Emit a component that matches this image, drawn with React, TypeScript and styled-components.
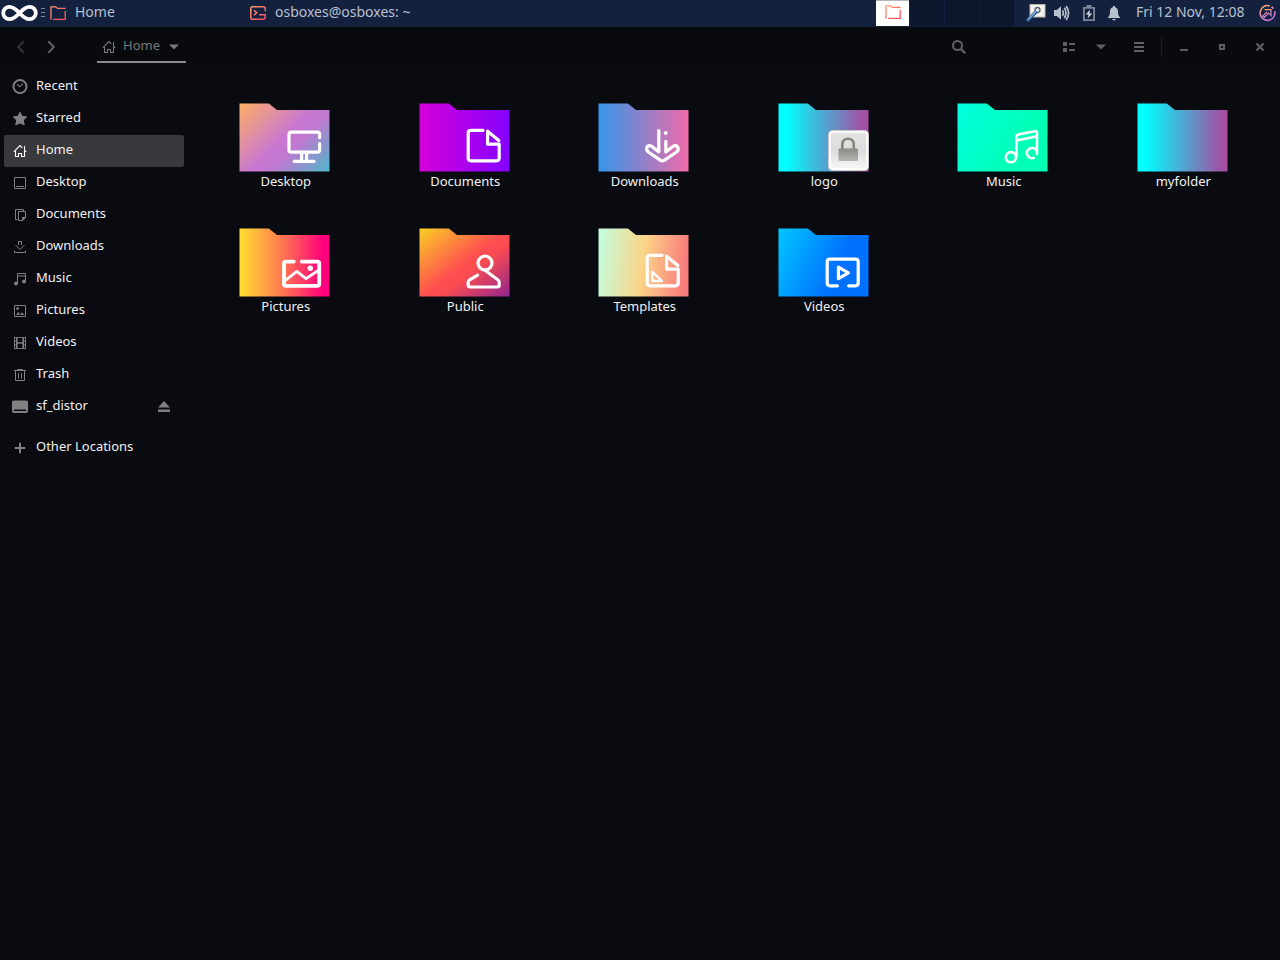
import React from "react";
import styled, { createGlobalStyle } from "styled-components";

const GlobalStyle = createGlobalStyle`
  * { box-sizing: border-box; }
  html, body, #root { height: 100%; }
  body {
    margin: 0;
    background: #0a0b10;
    color: #f0f0f1;
    font: 13px/20px "Noto Sans", "Open Sans", sans-serif;
  }
  button { font: inherit; color: inherit; background: none; border: 0; padding: 0; margin: 0; }
  a { color: inherit; text-decoration: none; }
  ul { list-style: none; margin: 0; padding: 0; }
  svg { display: block; flex: none; }
`;

const Screen = styled.div`
  min-height: 100%;
  display: flex;
  flex-direction: column;
`;

/* ---------- top panel ---------- */

const Panel = styled.header`
  display: flex;
  height: 27px;
  background: #13213f;
  color: #b9c0ce;
  font-size: 14px;
`;

const MenuButton = styled.button`
  width: 50px;
  height: 27px;
`;

const Tasks = styled.div`
  flex: 1;
  display: flex;
  min-width: 0;
`;

const Task = styled.button`
  display: flex;
  align-items: center;
  gap: 9px;
  width: 200px;
  text-align: left;
  white-space: nowrap;
`;

const Caption = styled.span`
  padding-bottom: 4px;
`;

const Workspaces = styled.div`
  display: flex;
  gap: 1px;
  padding-bottom: 1px;
`;

const Workspace = styled.button<{ $active?: boolean }>`
  display: flex;
  justify-content: center;
  width: ${(p) => (p.$active ? 33 : 34)}px;
  background: ${(p) => (p.$active ? "#ffffff" : "#0c172d")};
  border-top: 1px solid ${(p) => (p.$active ? "#b4b4b4" : "#0c172d")};
`;

const WorkspaceDrawing = styled.span`
  height: 25px;
  overflow: hidden;
  display: flex;
  align-items: flex-end;
`;

const Tray = styled.div`
  display: flex;
  align-items: center;
  gap: 13px;
  padding: 0 4px 0 12px;
`;

const TrayPair = styled.div`
  display: flex;
  gap: 8px;
`;

const TrayButton = styled.button`
  display: flex;
`;

const Clock = styled.button`
  min-width: 113px;
  padding: 0 0 4px 3px;
  text-align: left;
  white-space: nowrap;
`;

/* ---------- file manager ---------- */

const Toolbar = styled.div`
  display: flex;
  align-items: center;
  height: 40px;
  padding: 0 1px 0 6px;
  background: #090a0e;
  border-bottom: 1px solid #06070a;
  color: #5f6063;
`;

const ToolButton = styled.button<{ $width?: number; $dim?: boolean }>`
  display: flex;
  align-items: center;
  justify-content: center;
  width: ${(p) => p.$width ?? 38}px;
  height: 40px;
  color: ${(p) => (p.$dim ? "#343539" : "inherit")};
`;

const PathButton = styled.button`
  display: flex;
  align-items: center;
  gap: 6px;
  height: 33px;
  margin-left: 31px;
  padding: 3px 7px 0 4px;
  border-bottom: 2px solid #8b8c8e;
  color: #77787a;
`;

const PathName = styled.span`
  padding-bottom: 4px;
  padding-right: 3px;
`;

const Spacer = styled.div`
  flex: 1;
`;

const ToolGroup = styled.div`
  display: flex;
  margin-left: 75px;
  gap: 3px;
`;

const Pair = styled.div`
  display: flex;
`;

const Divider = styled.div`
  width: 1px;
  height: 20px;
  margin: 0 3px;
  background: #1c1d21;
`;

const Body = styled.div`
  flex: 1;
  display: flex;
`;

const Sidebar = styled.nav`
  width: 189px;
  flex: none;
  padding-top: 4px;
  border-right: 1px solid #06070a;
`;

const Place = styled.a<{ $current?: boolean }>`
  display: flex;
  align-items: center;
  gap: 8px;
  height: 32px;
  margin: 0 4px;
  padding: 0 8px;
  border-radius: 2px;
  background: ${(p) => (p.$current ? "#38393c" : "transparent")};
  svg { color: ${(p) => (p.$current ? "#ffffff" : "#7f8082")}; }
`;

const PlaceRow = styled.div`
  display: flex;
  align-items: center;
  justify-content: space-between;
  padding-right: 16px;
`;

const EjectButton = styled.button`
  color: #7f8082;
`;

const Rule = styled.hr`
  height: 1px;
  margin: 4px 0;
  border: 0;
  background: #050609;
`;

const Files = styled.main`
  flex: 1;
  padding: 36px 8px 0 6px;
`;

const Grid = styled.ul`
  display: grid;
  grid-template-columns: repeat(auto-fill, minmax(170px, 1fr));
  row-gap: 37px;
`;

const Item = styled.li`
  display: flex;
  justify-content: center;
`;

const FolderButton = styled.button`
  display: flex;
  flex-direction: column;
  align-items: center;
  height: 88px;
`;

const FolderName = styled.span`
  padding-left: 2px;
  line-height: 18px;
`;

/* ---------- drawings ---------- */

const Warm = ({ id }: { id: string }) => (
  <defs>
    <linearGradient id={id} x1="0" y1="0" x2="1" y2="1" gradientUnits="objectBoundingBox">
      <stop offset="0" stopColor="#ff9a6c" />
      <stop offset="1" stopColor="#ff4560" />
    </linearGradient>
  </defs>
);

const OutlineFolder = ({ id }: { id: string }) => (
  <svg width="16" height="27" viewBox="0 0 16 27" fill="none" stroke={`url(#${id})`} strokeWidth="1.3">
    <Warm id={id} />
    <path d="M3.2 19.3H15.2V11M1 19.8V6.8H5.6L7.6 8.4H15.6" />
  </svg>
);

const TerminalIcon = () => (
  <svg width="16" height="27" viewBox="0 0 16 27" fill="none" stroke="url(#term)" strokeWidth="1.5">
    <Warm id="term" />
    <path d="M15.2 11.2V8.7Q15.2 6.8 13.2 6.8H2.8Q.8 6.8 .8 8.7V17.3Q.8 19.2 2.8 19.2H13.2Q15.2 19.2 15.2 17.3V14.7H9.2M3.9 10.2L6.8 12.7L3.9 15.2" />
  </svg>
);

const LogoIcon = () => (
  <svg width="50" height="27" viewBox="0 0 50 27" fill="none">
    <path
      d="M19.5 13C15.5 8.5 13 6.8 9.4 6.8A6.2 6.2 0 0 0 9.4 19.2C13 19.2 15.5 17.5 19.5 13C23.5 8.5 26 6.8 29.6 6.8A6.2 6.2 0 0 1 29.6 19.2C26 19.2 23.5 17.5 19.5 13Z"
      stroke="#fff"
      strokeWidth="3.8"
    />
    <path d="M41 8.5H45M41 12.5H45M41 16.5H45" stroke="#7f8797" />
  </svg>
);

const ViewerIcon = () => (
  <svg width="20" height="27" viewBox="0 0 20 27">
    <rect x="4" y="4.5" width="15" height="12.5" fill="#f2f2ef" stroke="#b9b7ad" />
    <circle cx="11.5" cy="10" r="2.5" fill="#dfe6ee" stroke="#59616b" strokeWidth="1.3" />
    <path d="M1 21L10.5 11.5" stroke="#2f5c98" strokeWidth="3.4" />
    <path d="M2 19.5L10 11.5" stroke="#8fb6e2" strokeWidth="1.2" />
  </svg>
);

const SpeakerIcon = () => (
  <svg width="16" height="27" viewBox="0 0 16 27" fill="none" stroke="#b9c0ce" strokeWidth="1.7">
    <path d="M0 10H2.8L7 6.2V19.8L2.8 16H0Z" fill="#b9c0ce" stroke="none" />
    <path d="M8.4 10.2Q10.4 13 8.4 15.8M10.3 7.8Q13.6 13 10.3 18.2M12.2 6Q17 13 12.2 20" />
  </svg>
);

const BatteryIcon = () => (
  <svg width="12" height="27" viewBox="0 0 12 27">
    <path d="M3.5 5H8.5V7H12V21H0V7H3.5ZM1.8 8.8V19.2H10.2V8.8Z" fill="#7e8798" fillRule="evenodd" />
    <path d="M7.2 9.5L2.8 14.4H5.6L4.6 18.6L9.2 13.4H6.4Z" fill="#d5d9e0" />
  </svg>
);

const BellIcon = () => (
  <svg width="12" height="27" viewBox="0 0 12 27" fill="#b9c0ce">
    <path d="M5 6H7V7.2C9.2 7.7 10 9.5 10 11.5C10 14.8 10.6 16 12 17.2V18H0V17.2C1.4 16 2 14.8 2 11.5C2 9.5 2.8 7.7 5 7.2ZM4 19H8Q7.6 20.4 6 20.4Q4.4 20.4 4 19Z" />
  </svg>
);

const SessionIcon = () => (
  <svg width="17" height="27" viewBox="0 0 17 27" fill="none" stroke="url(#ring)" strokeWidth="1.6">
    <defs>
      <linearGradient id="ring" x1="0" y1="0" x2="0.6" y2="1">
        <stop offset="0" stopColor="#ffb169" />
        <stop offset="0.55" stopColor="#e48cae" />
        <stop offset="1" stopColor="#c473e0" />
      </linearGradient>
    </defs>
    <path d="M10.8 5.9A7.4 7.4 0 1 0 15.7 11.2M12.6 6.8L14.4 8.6" />
    <path d="M5.5 9.6H12V15.6L9.6 13.2L5.4 17.4L4 15.9L8.2 11.8" strokeWidth="1.2" />
  </svg>
);

const HouseIcon = () => (
  <svg width="16" height="16" viewBox="0 0 16 16" fill="none" stroke="currentColor" strokeWidth="1.1">
    <path d="M3.5 8V13.5H6.5V10.5H9.5V13.5H12.5V8M1.8 8.8L8 2.6L10.2 4.8M14.2 8.8L12.5 7V3" />
  </svg>
);

const Caret = () => (
  <svg width="10" height="6" viewBox="0 0 10 6">
    <path d="M0 0.5H10L5 5.5Z" fill="currentColor" />
  </svg>
);

const Chevron = ({ back }: { back?: boolean }) => (
  <svg width="14" height="14" viewBox="0 0 14 14" fill="none" stroke="currentColor" strokeWidth="2">
    <path d={back ? "M9.7 1.3L4.2 7L9.7 12.7" : "M4.3 1.3L9.8 7L4.3 12.7"} />
  </svg>
);

const placeIcons: Record<string, React.ReactNode> = {
  Recent: (
    <>
      <circle cx="8" cy="7.5" r="6.5" strokeWidth="2" />
      <path d="M5 5.2L7.6 7.8L11 4.6" strokeWidth="1.1" />
    </>
  ),
  Starred: (
    <path
      d="M8 1.2L10 5.3L14.6 5.9L11.3 9.1L12.2 13.9L8 11.9L3.8 13.9L4.7 9.1L1.4 5.9L6 5.3Z"
      fill="currentColor"
      strokeLinejoin="round"
    />
  ),
  Desktop: <path d="M2.5 2.5H13.5V13.5H2.5ZM4 11.5H12" />,
  Documents: (
    <>
      <path d="M5.5 12.5H3.5V2.5H11.5V4M6 4.5H13.5V11L10.5 13.5H6.5V4.5" />
      <path d="M10 10H14L10 14Z" fill="currentColor" stroke="none" />
    </>
  ),
  Downloads: <path d="M6.5 6V2.5H9.5V6M3.5 6L8 10.5L12.5 6M2.5 11.5V13.5H13.5V11.5" />,
  Music: (
    <>
      <path d="M5.5 12V2.5H13.5V10.5M5.5 5H13.5" />
      <circle cx="4" cy="12.4" r="2" fill="currentColor" stroke="none" />
      <circle cx="12" cy="10.6" r="2" fill="currentColor" stroke="none" />
    </>
  ),
  Pictures: (
    <>
      <path d="M2.5 2.5H13.5V13.5H2.5Z" />
      <path d="M4 12L6.5 9L7.5 10V12ZM8 12L10 9.3L12.4 12Z" fill="currentColor" stroke="none" />
      <circle cx="5.6" cy="5.6" r="1.4" fill="currentColor" stroke="none" />
    </>
  ),
  Videos: (
    <>
      <path d="M4.8 2V14M11.2 2V14M5 8H11" strokeWidth="1.6" />
      <path d="M2.5 2V14M13.5 2V14M2 2.5H14M2 13.5H14M2 6H5M2 10H5M11 6H14M11 10H14" strokeWidth="0.9" />
    </>
  ),
  Trash: <path d="M2 3.5H14M5.5 3.5V2.5H10.5V3.5M3.5 4V13.5H12.5V4M6.5 6V11.5M9.5 6V11.5" />,
  sf_distor: (
    <path
      d="M2 1.5H14Q16 1.5 16 3.5V12Q16 14 14 14H2Q0 14 0 12V3.5Q0 1.5 2 1.5ZM2 10.5V12H14V10.5Z"
      fill="currentColor"
      fillRule="evenodd"
      stroke="none"
    />
  ),
  "Other Locations": <path d="M8 2.8V13.2M2.8 8H13.2" strokeWidth="2" />,
};

const PlaceIcon = ({ name }: { name: string }) =>
  name === "Home" ? (
    <HouseIcon />
  ) : (
    <svg width="16" height="16" viewBox="0 0 16 16" fill="none" stroke="currentColor">
      {placeIcons[name]}
    </svg>
  );

type Folder = {
  name: string;
  stops: [number, string][];
  to: [number, number];
  glyph?: React.ReactNode;
};

const page = "M64 27.3H52Q49.2 27.3 49.2 30V55Q49.2 57.8 52 57.8H77.3Q80.2 57.8 80.2 55V41.2H68.6V28.2L79.8 37.6";
const aqua: [number, string][] = [[0, "#00ffff"], [0.08, "#00ffff"], [0.5, "#4fa8d3"], [0.92, "#a052a4"], [1, "#a84ca3"]];

const folders: Folder[] = [
  {
    name: "Desktop",
    stops: [[0, "#ffaf62"], [0.5, "#c877d3"], [0.62, "#c078d0"], [1, "#4cb8c9"]],
    to: [80, 80],
    glyph: <path d="M80.6 34.6V31.4Q80.6 29.2 78.4 29.2H52.2Q50 29.2 50 31.4V47Q50 49.2 52.2 49.2H78.4Q80.6 49.2 80.6 47V40.6M62.6 49.5V58M67.6 49.5V58M55.2 58.4H75" />,
  },
  {
    name: "Documents",
    stops: [[0, "#d400d8"], [1, "#8400ff"]],
    to: [91, 0],
    glyph: <path d={page} />,
  },
  {
    name: "Downloads",
    stops: [[0, "#3396ea"], [1, "#f06ba8"]],
    to: [91, 0],
    glyph: (
      <>
        <path d="M60.8 27.6V49L54 43.6Q50.5 41.3 49 44.2Q47.7 47 50.6 49.2L62.6 57.4Q64.4 58.5 66.2 57.4L78.2 49.2Q81.2 47 79.8 44.2Q78.3 41.3 74.8 43.6L67.8 49V38.4" />
        <circle cx="67.7" cy="30.1" r="2" fill="#fff" stroke="none" />
      </>
    ),
  },
  {
    name: "logo",
    stops: aqua,
    to: [91, 0],
    glyph: (
      <>
        <rect x="50.5" y="27.5" width="40" height="40" rx="4" fill="url(#emblem)" stroke="#c9c9cb" strokeWidth="1" />
        <rect x="52" y="29" width="37" height="37" rx="3" stroke="#fff" strokeWidth="1.5" />
        <path d="M64.3 47V42Q64.3 35.8 70 35.8Q75.8 35.8 75.8 42V47" stroke="#85867f" strokeWidth="2.6" />
        <rect x="60.5" y="45.5" width="19.5" height="12.5" rx="1" fill="url(#lockbody)" stroke="none" />
      </>
    ),
  },
  {
    name: "Music",
    stops: [[0, "#00ffe0"], [0.7, "#00ffb8"], [1, "#00ffb4"]],
    to: [91, 50],
    glyph: (
      <g strokeWidth="2.6">
        <circle cx="53.9" cy="54.2" r="5.1" />
        <path d="M59.4 54V34Q59.4 31.9 61.4 31.4L77.6 28.2Q80 27.9 80 30.2V51M59.4 37.6L80 33.2M76.6 54.9A5.1 5.1 0 1 1 79.8 48.4" />
      </g>
    ),
  },
  { name: "myfolder", stops: aqua, to: [91, 0] },
  {
    name: "Pictures",
    stops: [[0, "#ffe12f"], [0.5, "#ff7252"], [0.92, "#ff007c"], [1, "#ff007c"]],
    to: [91, 0],
    glyph: (
      <>
        <path d="M54.8 33.6H46.8Q45 33.6 45 35.4V56Q45 57.8 46.8 57.8H78.4Q80.2 57.8 80.2 56V35.4Q80.2 33.6 78.4 33.6H62.8" strokeWidth="3.8" />
        <path d="M46 52.6L57.8 43.4L67 50.6L80 42" strokeWidth="2.8" />
        <circle cx="71.2" cy="40.2" r="2.7" fill="#fff" stroke="none" />
      </>
    ),
  },
  {
    name: "Public",
    stops: [[0, "#fad026"], [0.5, "#ff4f4f"], [0.6, "#f94b52"], [1, "#8a2391"]],
    to: [70, 88],
    glyph: (
      <>
        <circle cx="66" cy="35" r="7" />
        <path d="M58.6 47.2L50.6 51.8Q49.2 52.8 49.2 54.2V57Q49.2 59 51.2 59H78.2Q80.2 59 80.2 57V54.2Q80.2 52.8 78.8 51.8L65.6 42" />
      </>
    ),
  },
  {
    name: "Templates",
    stops: [[0, "#c0ffe2"], [0.53, "#fcd487"], [1, "#f97c7d"]],
    to: [91, 10],
    glyph: (
      <>
        <path d={page} />
        <path d="M54.4 43.8V53H64Z" strokeWidth="2.4" />
      </>
    ),
  },
  {
    name: "Videos",
    stops: [[0, "#00c8ff"], [0.72, "#0070ff"], [1, "#0070ff"]],
    to: [91, 40],
    glyph: (
      <>
        <path d="M59.4 57.8H52Q49.2 57.8 49.2 55V34Q49.2 31.2 52 31.2H77.4Q80.2 31.2 80.2 34V55Q80.2 57.8 77.4 57.8H70.6" />
        <path d="M60.4 39.2V50.6L70.4 44.9Z" />
      </>
    ),
  },
];

const FolderIcon = ({ name, stops, to, glyph }: Folder) => (
  <svg width="91" height="69" viewBox="0 0 91 69">
    <defs>
      <linearGradient id={`fill-${name}`} gradientUnits="userSpaceOnUse" x1="0" y1="0" x2={to[0]} y2={to[1]}>
        {stops.map(([offset, color]) => (
          <stop key={offset} offset={offset} stopColor={color} />
        ))}
      </linearGradient>
      <linearGradient id="emblem" x1="0" y1="0" x2="0" y2="1">
        <stop offset="0" stopColor="#e4e4e5" />
        <stop offset="0.5" stopColor="#dcdcdd" />
        <stop offset="1" stopColor="#fafafa" />
      </linearGradient>
      <linearGradient id="lockbody" x1="0" y1="0" x2="0" y2="1">
        <stop offset="0" stopColor="#8b8c86" />
        <stop offset="1" stopColor="#b4b5b0" />
      </linearGradient>
    </defs>
    <path d="M.5 .5H29.8L38 7H90.5V68.5H.5Z" fill={`url(#fill-${name})`} />
    <g fill="none" stroke="#fff" strokeWidth="3.2" strokeLinecap="round" strokeLinejoin="round">
      {glyph}
    </g>
  </svg>
);

const places = ["Recent", "Starred", "Home", "Desktop", "Documents", "Downloads", "Music", "Pictures", "Videos", "Trash"];

const PlaceLink = ({ name }: { name: string }) => (
  <Place href="#" $current={name === "Home"} aria-current={name === "Home" ? "page" : undefined}>
    <PlaceIcon name={name} />
    <Caption>{name}</Caption>
  </Place>
);

export default function App() {
  return (
    <Screen>
      <GlobalStyle />
      <Panel>
        <MenuButton aria-label="Applications"><LogoIcon /></MenuButton>
        <Tasks>
          <Task><OutlineFolder id="task-folder" /><Caption>Home</Caption></Task>
          <Task><TerminalIcon /><Caption>osboxes@osboxes: ~</Caption></Task>
        </Tasks>
        <Workspaces>
          <Workspace $active aria-label="Workspace 1">
            <WorkspaceDrawing><OutlineFolder id="ws-folder" /></WorkspaceDrawing>
          </Workspace>
          <Workspace aria-label="Workspace 2" />
          <Workspace aria-label="Workspace 3" />
          <Workspace aria-label="Workspace 4" />
        </Workspaces>
        <Tray>
          <TrayPair>
            <TrayButton aria-label="Viewer"><ViewerIcon /></TrayButton>
            <TrayButton aria-label="Volume"><SpeakerIcon /></TrayButton>
          </TrayPair>
          <TrayButton aria-label="Battery"><BatteryIcon /></TrayButton>
          <TrayButton aria-label="Notifications"><BellIcon /></TrayButton>
          <Clock>Fri 12 Nov, 12:08</Clock>
          <TrayButton aria-label="Session"><SessionIcon /></TrayButton>
        </Tray>
      </Panel>

      <Toolbar>
        <ToolButton $width={30} $dim aria-label="Back"><Chevron back /></ToolButton>
        <ToolButton $width={30} aria-label="Forward"><Chevron /></ToolButton>
        <PathButton>
          <HouseIcon />
          <PathName>Home</PathName>
          <Caret />
        </PathButton>
        <Spacer />
        <ToolButton aria-label="Search">
          <svg width="14" height="14" viewBox="0 0 14 14" fill="none" stroke="currentColor" strokeWidth="2">
            <circle cx="5.5" cy="5.5" r="4.5" />
            <path d="M8.8 8.8L13.2 13.2" strokeWidth="2.4" />
          </svg>
        </ToolButton>
        <ToolGroup>
          <Pair>
            <ToolButton $width={32} aria-label="List view">
              <svg width="12" height="10" viewBox="0 0 12 10" fill="currentColor">
                <path d="M0 0H4V4H0ZM0 6H4V10H0ZM6 1H12V3H6ZM6 7H12V9H6Z" />
              </svg>
            </ToolButton>
            <ToolButton $width={32} aria-label="View options"><Caret /></ToolButton>
          </Pair>
          <ToolButton aria-label="Menu">
            <svg width="10" height="10" viewBox="0 0 10 10" fill="currentColor">
              <path d="M0 0H10V2H0ZM0 4H10V6H0ZM0 8H10V10H0Z" />
            </svg>
          </ToolButton>
        </ToolGroup>
        <Divider />
        <ToolButton aria-label="Minimize">
          <svg width="8" height="8" viewBox="0 0 8 8"><path d="M0 6H8V8H0Z" fill="currentColor" /></svg>
        </ToolButton>
        <ToolButton aria-label="Maximize">
          <svg width="6" height="6" viewBox="0 0 6 6"><path d="M1 1H5V5H1Z" fill="none" stroke="currentColor" strokeWidth="2" /></svg>
        </ToolButton>
        <ToolButton aria-label="Close">
          <svg width="8" height="8" viewBox="0 0 8 8"><path d="M0.5 0.5L7.5 7.5M7.5 0.5L0.5 7.5" stroke="currentColor" strokeWidth="2" /></svg>
        </ToolButton>
      </Toolbar>

      <Body>
        <Sidebar aria-label="Places">
          {places.map((name) => <PlaceLink key={name} name={name} />)}
          <PlaceRow>
            <PlaceLink name="sf_distor" />
            <EjectButton aria-label="Eject sf_distor">
              <svg width="16" height="16" viewBox="0 0 16 16" fill="currentColor">
                <path d="M8 2L14 8.5H2ZM2 10.5H14V13H2Z" />
              </svg>
            </EjectButton>
          </PlaceRow>
          <Rule />
          <PlaceLink name="Other Locations" />
        </Sidebar>
        <Files>
          <Grid>
            {folders.map((folder) => (
              <Item key={folder.name}>
                <FolderButton>
                  <FolderIcon {...folder} />
                  <FolderName>{folder.name}</FolderName>
                </FolderButton>
              </Item>
            ))}
          </Grid>
        </Files>
      </Body>
    </Screen>
  );
}
